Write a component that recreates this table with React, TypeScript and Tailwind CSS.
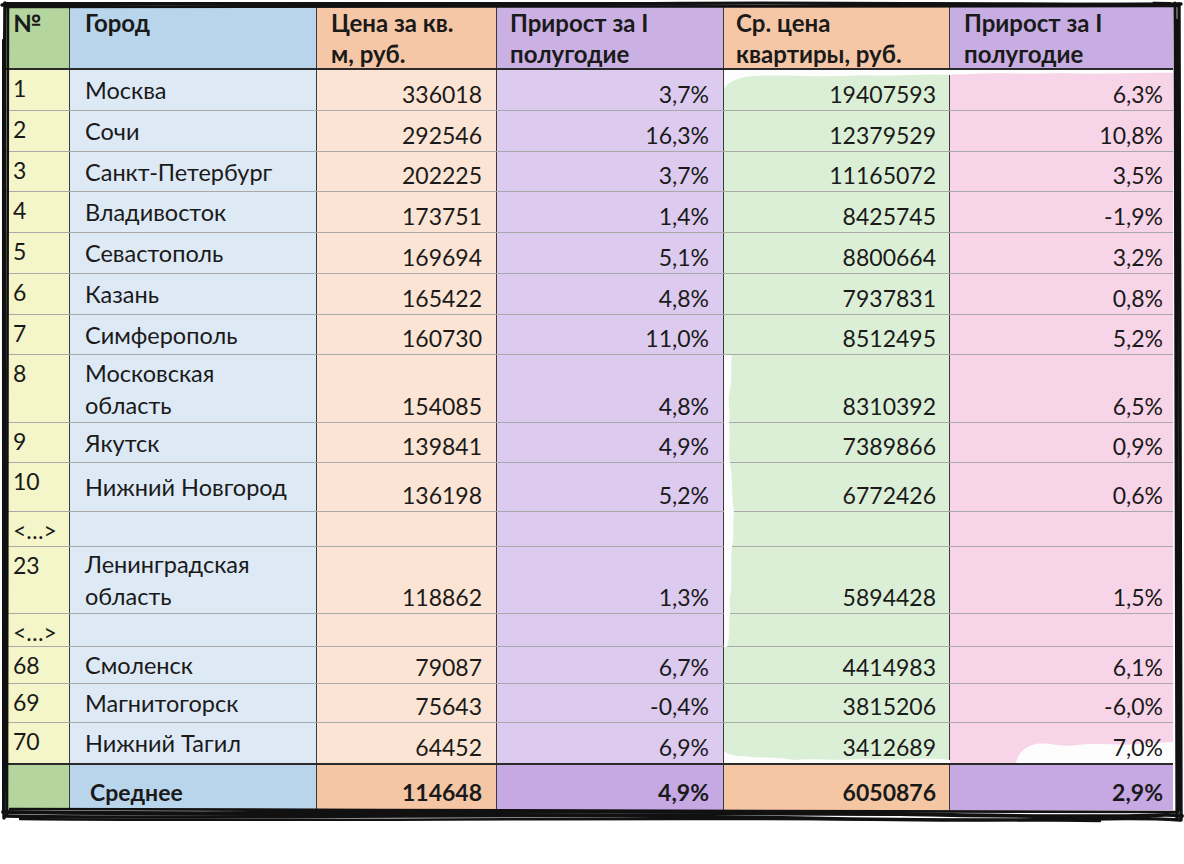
import React from "react";

type Row = { n: string; city: string; a: string; b: string; c: string; d: string; h: number };

const rows: Row[] = [
  { n: "1", city: "Москва", a: "336018", b: "3,7%", c: "19407593", d: "6,3%", h: 41 },
  { n: "2", city: "Сочи", a: "292546", b: "16,3%", c: "12379529", d: "10,8%", h: 41 },
  { n: "3", city: "Санкт-Петербург", a: "202225", b: "3,7%", c: "11165072", d: "3,5%", h: 40 },
  { n: "4", city: "Владивосток", a: "173751", b: "1,4%", c: "8425745", d: "-1,9%", h: 41 },
  { n: "5", city: "Севастополь", a: "169694", b: "5,1%", c: "8800664", d: "3,2%", h: 41 },
  { n: "6", city: "Казань", a: "165422", b: "4,8%", c: "7937831", d: "0,8%", h: 41 },
  { n: "7", city: "Симферополь", a: "160730", b: "11,0%", c: "8512495", d: "5,2%", h: 40 },
  { n: "8", city: "Московская область", a: "154085", b: "4,8%", c: "8310392", d: "6,5%", h: 68 },
  { n: "9", city: "Якутск", a: "139841", b: "4,9%", c: "7389866", d: "0,9%", h: 40 },
  { n: "10", city: "Нижний Новгород", a: "136198", b: "5,2%", c: "6772426", d: "0,6%", h: 49 },
  { n: "<…>", city: "", a: "", b: "", c: "", d: "", h: 35 },
  { n: "23", city: "Ленинградская область", a: "118862", b: "1,3%", c: "5894428", d: "1,5%", h: 67 },
  { n: "<…>", city: "", a: "", b: "", c: "", d: "", h: 33 },
  { n: "68", city: "Смоленск", a: "79087", b: "6,7%", c: "4414983", d: "6,1%", h: 37 },
  { n: "69", city: "Магнитогорск", a: "75643", b: "-0,4%", c: "3815206", d: "-6,0%", h: 39 },
  { n: "70", city: "Нижний Тагил", a: "64452", b: "6,9%", c: "3412689", d: "7,0%", h: 40 },
];

// white "unpainted" paper patches of the watercolour wash, per cell (local coords)
const greenWash: Record<number, string> = {
  0: "M0 0 L226 0 L226 5 C200 3 170 7 140 5 C100 8 60 4 30 6 C15 7 6 11 0 18 Z",
  7: "M0 0 L8 0 C6 12 9 25 5 40 C4 50 7 60 5 68 L0 68 Z",
  8: "M0 0 L5 0 C7 10 4 25 6 40 L0 40 Z",
  9: "M0 0 L6 0 C9 15 7 30 10 49 L0 49 Z",
  10: "M0 0 L10 0 C8 12 11 24 8 35 L0 35 Z",
  11: "M0 0 L8 0 C6 15 9 35 6 50 C5 58 7 63 6 67 L0 67 Z",
  12: "M0 0 L6 0 C4 10 7 22 3 33 L0 33 Z",
  15: "M0 40 L0 28 C5 31 10 34 20 33 C35 36 50 33 70 37 C90 35 110 38 140 36 C170 38 200 34 226 37 L226 40 Z",
};
const pinkWash: Record<number, string> = {
  0: "M0 0 L223 0 L223 3 C190 2 150 5 110 3 C80 5 50 2 20 4 C10 5 4 3 0 6 Z",
  15: "M66 40 C68 30 74 24 86 21 C100 19 112 25 126 22 C150 19 172 24 200 20 L223 19 L223 40 Z",
};

function Wash({ d, w, h }: { d: string; w: number; h: number }) {
  return (
    <svg className="pointer-events-none absolute left-0 top-0" width={w} height={h} viewBox={`0 0 ${w} ${h}`}>
      <path d={d} fill="#fdfdfd" />
    </svg>
  );
}

const font = { fontFamily: "Lato, 'Open Sans', 'Noto Sans', sans-serif" };

function Border() {
  return (
    <svg
      className="pointer-events-none absolute left-0 top-0"
      width="1184"
      height="864"
      viewBox="0 0 1184 864"
      fill="none"
      stroke="#111"
      strokeLinecap="round"
    >
      {/* top */}
      <path d="M2 5 C 200 2, 420 7, 620 4 S 1000 6, 1181 4" strokeWidth="3.4" />
      <path d="M6 7 C 300 5, 700 9, 1178 6" strokeWidth="2.6" />
      <path d="M4 3 C 150 4, 500 1, 900 3 S 1100 2, 1170 3" strokeWidth="2" />
      {/* left */}
      <path d="M5 3 C 3 200, 7 500, 4 818" strokeWidth="3.4" />
      <path d="M8 6 C 7 300, 9 600, 7 815" strokeWidth="2.6" />
      <path d="M3 40 C 2 300, 5 600, 3 812" strokeWidth="2" />
      {/* right */}
      <path d="M1175 3 C 1177 300, 1174 600, 1177 818" strokeWidth="3.2" />
      <path d="M1179 4 C 1181 200, 1178 500, 1181 820" strokeWidth="3.4" />
      <path d="M1177 20 C 1179 250, 1176 560, 1179 810" strokeWidth="2.4" />
      {/* bottom */}
      <path d="M3 812 C 300 816, 600 808, 900 814 S 1150 812, 1182 816" strokeWidth="3.8" />
      <path d="M5 816 C 200 820, 500 812, 800 818 S 1100 815, 1180 820" strokeWidth="3.4" />
      <path d="M10 809 C 400 811, 800 809, 1178 812" strokeWidth="2.6" />
      <path d="M20 819 C 300 822, 700 816, 1100 821" strokeWidth="2.4" />
      <path d="M40 813 C 350 818, 650 811, 1150 817" strokeWidth="2" />
    </svg>
  );
}

const vline = "border-r-[1.5px] border-r-[#3a3a3a]";

export default function App() {
  return (
    <div className="relative h-[864px] w-[1184px] overflow-hidden bg-white text-[#1a1a1a]" style={font}>
      <div className="pl-[5px] pt-[5px]">
        <div className="flex w-[1168px] flex-col">
          {/* header */}
          <div className="flex h-[65px] border-b-2 border-b-[#2a2a2a] text-[24px] font-bold leading-[31px]">
            <div className={`w-[65px] bg-[#b5d59f] pl-[8px] pt-[2px] ${vline}`}>№</div>
            <div className={`w-[247px] bg-[#b9d5ec] pl-[15px] pt-[2px] ${vline}`}>Город</div>
            <div className={`w-[180px] bg-[#f5c7a6] pl-[14px] pt-[2px] ${vline}`}>
              Цена за кв.<br />м, руб.
            </div>
            <div className={`w-[227px] bg-[#cbb0e4] pl-[13px] pt-[2px] ${vline}`}>
              Прирост за I<br />полугодие
            </div>
            <div className={`w-[226px] bg-[#f5c7a6] pl-[12px] pt-[2px] ${vline}`}>
              Ср. цена<br />квартиры, руб.
            </div>
            <div className="w-[223px] bg-[#c8ade3] pl-[14px] pt-[2px]">
              Прирост за I<br />полугодие
            </div>
          </div>
          {/* body */}
          {rows.map((r, i) => (
            <div
              key={i}
              className={`flex text-[23px] leading-[32px] ${i < rows.length - 1 ? "border-b-[1.5px] border-b-[#a9a9a9]" : ""}`}
              style={{ height: r.h }}
            >
              <div className={`flex w-[65px] items-start bg-[#f4f5c9] pl-[8px] pt-[2px] ${vline}`}>{r.n}</div>
              <div className={`flex w-[247px] items-center bg-[#dde9f5] pl-[15px] text-[23.5px] ${vline}`}>
                <span className="block w-[215px]">{r.city}</span>
              </div>
              <div className={`flex w-[180px] items-end justify-end bg-[#fbe4d3] pr-[14px] ${vline}`}>{r.a}</div>
              <div className={`flex w-[227px] items-end justify-end bg-[#dccbee] pr-[14px] ${vline}`}>{r.b}</div>
              <div className={`relative flex w-[226px] items-end justify-end bg-[#dbefd6] pr-[13px] ${vline}`}>
                {greenWash[i] && <Wash d={greenWash[i]} w={226} h={r.h} />}
                <span className="relative">{r.c}</span>
              </div>
              <div className="relative flex w-[223px] items-end justify-end bg-[#f8d4e8] pr-[10px]">
                {pinkWash[i] && <Wash d={pinkWash[i]} w={223} h={r.h} />}
                <span className="relative">{r.d}</span>
              </div>
            </div>
          ))}
          {/* footer */}
          <div className="flex h-[47px] border-t-2 border-t-[#2a2a2a] text-[23px] font-bold leading-[32px]">
            <div className={`w-[65px] bg-[#b5d59f] ${vline}`}></div>
            <div className={`flex w-[247px] items-end bg-[#b9d5ec] pb-[2px] pl-[20px] ${vline}`}>Среднее</div>
            <div className={`flex w-[180px] items-end justify-end bg-[#f5c6a4] pb-[2px] pr-[14px] ${vline}`}>114648</div>
            <div className={`flex w-[227px] items-end justify-end bg-[#c6a8e3] pb-[2px] pr-[14px] ${vline}`}>4,9%</div>
            <div className={`flex w-[226px] items-end justify-end bg-[#f5c6a4] pb-[2px] pr-[13px] ${vline}`}>6050876</div>
            <div className="flex w-[223px] items-end justify-end bg-[#c6a8e3] pb-[2px] pr-[10px]">2,9%</div>
          </div>
        </div>
      </div>
      <Border />
    </div>
  );
}
